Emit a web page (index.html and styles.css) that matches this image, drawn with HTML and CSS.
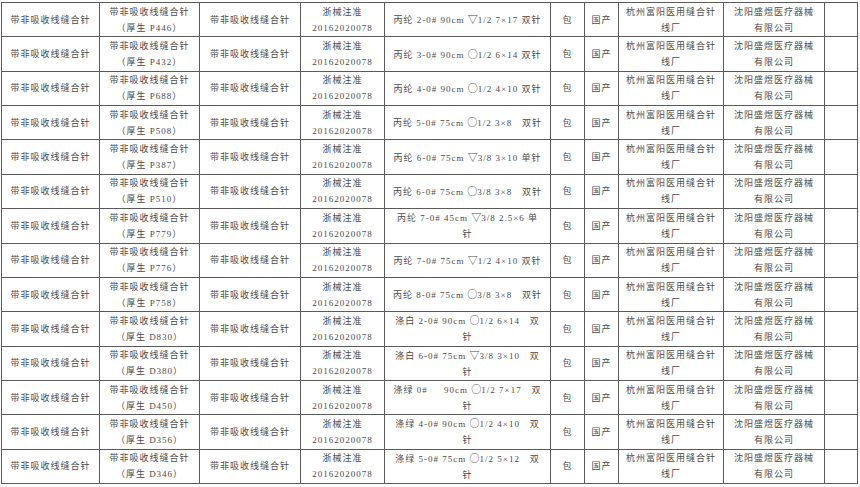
FILE: index.html
```html
<!DOCTYPE html>
<html lang="zh-CN">
<head>
<meta charset="utf-8">
<title>缝合针</title>
<link rel="stylesheet" href="styles.css">
</head>
<body>
<table class="grid">
<colgroup>
<col class="c1"><col class="c2"><col class="c3"><col class="c4"><col class="c5"><col class="c6"><col class="c7"><col class="c8"><col class="c9"><col class="c10">
</colgroup>
<tbody>
<tr><td>带非吸收线缝合针</td><td>带非吸收线缝合针<br>（厚生 P446）</td><td>带非吸收线缝合针</td><td>浙械注准<br>20162020078</td><td class="spec">丙纶 2-0# 90cm <span class="sym">▽</span>1/2 7×17 双针</td><td>包</td><td>国产</td><td>杭州富阳医用缝合针<br>线厂</td><td>沈阳盛煜医疗器械<br>有限公司</td><td></td></tr>
<tr><td>带非吸收线缝合针</td><td>带非吸收线缝合针<br>（厚生 P432）</td><td>带非吸收线缝合针</td><td>浙械注准<br>20162020078</td><td class="spec">丙纶 3-0# 90cm <span class="sym">○</span>1/2 6×14 双针</td><td>包</td><td>国产</td><td>杭州富阳医用缝合针<br>线厂</td><td>沈阳盛煜医疗器械<br>有限公司</td><td></td></tr>
<tr><td>带非吸收线缝合针</td><td>带非吸收线缝合针<br>（厚生 P688）</td><td>带非吸收线缝合针</td><td>浙械注准<br>20162020078</td><td class="spec">丙纶 4-0# 90cm <span class="sym">○</span>1/2 4×10 双针</td><td>包</td><td>国产</td><td>杭州富阳医用缝合针<br>线厂</td><td>沈阳盛煜医疗器械<br>有限公司</td><td></td></tr>
<tr><td>带非吸收线缝合针</td><td>带非吸收线缝合针<br>（厚生 P508）</td><td>带非吸收线缝合针</td><td>浙械注准<br>20162020078</td><td class="spec">丙纶 5-0# 75cm <span class="sym">○</span>1/2 3×8&nbsp;&nbsp; 双针</td><td>包</td><td>国产</td><td>杭州富阳医用缝合针<br>线厂</td><td>沈阳盛煜医疗器械<br>有限公司</td><td></td></tr>
<tr><td>带非吸收线缝合针</td><td>带非吸收线缝合针<br>（厚生 P387）</td><td>带非吸收线缝合针</td><td>浙械注准<br>20162020078</td><td class="spec">丙纶 6-0# 75cm <span class="sym">▽</span>3/8 3×10 单针</td><td>包</td><td>国产</td><td>杭州富阳医用缝合针<br>线厂</td><td>沈阳盛煜医疗器械<br>有限公司</td><td></td></tr>
<tr><td>带非吸收线缝合针</td><td>带非吸收线缝合针<br>（厚生 P510）</td><td>带非吸收线缝合针</td><td>浙械注准<br>20162020078</td><td class="spec">丙纶 6-0# 75cm <span class="sym">○</span>3/8 3×8&nbsp;&nbsp; 双针</td><td>包</td><td>国产</td><td>杭州富阳医用缝合针<br>线厂</td><td>沈阳盛煜医疗器械<br>有限公司</td><td></td></tr>
<tr><td>带非吸收线缝合针</td><td>带非吸收线缝合针<br>（厚生 P779）</td><td>带非吸收线缝合针</td><td>浙械注准<br>20162020078</td><td class="spec">丙纶 7-0# 45cm <span class="sym">▽</span>3/8 2.5×6 单<br>针</td><td>包</td><td>国产</td><td>杭州富阳医用缝合针<br>线厂</td><td>沈阳盛煜医疗器械<br>有限公司</td><td></td></tr>
<tr><td>带非吸收线缝合针</td><td>带非吸收线缝合针<br>（厚生 P776）</td><td>带非吸收线缝合针</td><td>浙械注准<br>20162020078</td><td class="spec">丙纶 7-0# 75cm <span class="sym">▽</span>1/2 4×10 双针</td><td>包</td><td>国产</td><td>杭州富阳医用缝合针<br>线厂</td><td>沈阳盛煜医疗器械<br>有限公司</td><td></td></tr>
<tr><td>带非吸收线缝合针</td><td>带非吸收线缝合针<br>（厚生 P758）</td><td>带非吸收线缝合针</td><td>浙械注准<br>20162020078</td><td class="spec">丙纶 8-0# 75cm <span class="sym">○</span>3/8 3×8&nbsp;&nbsp; 双针</td><td>包</td><td>国产</td><td>杭州富阳医用缝合针<br>线厂</td><td>沈阳盛煜医疗器械<br>有限公司</td><td></td></tr>
<tr><td>带非吸收线缝合针</td><td>带非吸收线缝合针<br>（厚生 D830）</td><td>带非吸收线缝合针</td><td>浙械注准<br>20162020078</td><td class="spec">涤白 2-0# 90cm <span class="sym">○</span>1/2 6×14&nbsp;&nbsp; 双<br>针</td><td>包</td><td>国产</td><td>杭州富阳医用缝合针<br>线厂</td><td>沈阳盛煜医疗器械<br>有限公司</td><td></td></tr>
<tr><td>带非吸收线缝合针</td><td>带非吸收线缝合针<br>（厚生 D380）</td><td>带非吸收线缝合针</td><td>浙械注准<br>20162020078</td><td class="spec">涤白 6-0# 75cm <span class="sym">▽</span>3/8 3×10&nbsp;&nbsp; 双<br>针</td><td>包</td><td>国产</td><td>杭州富阳医用缝合针<br>线厂</td><td>沈阳盛煜医疗器械<br>有限公司</td><td></td></tr>
<tr><td>带非吸收线缝合针</td><td>带非吸收线缝合针<br>（厚生 D450）</td><td>带非吸收线缝合针</td><td>浙械注准<br>20162020078</td><td class="spec">涤绿 0#&nbsp;&nbsp;&nbsp;&nbsp; 90cm <span class="sym">○</span>1/2 7×17&nbsp;&nbsp; 双<br>针</td><td>包</td><td>国产</td><td>杭州富阳医用缝合针<br>线厂</td><td>沈阳盛煜医疗器械<br>有限公司</td><td></td></tr>
<tr><td>带非吸收线缝合针</td><td>带非吸收线缝合针<br>（厚生 D356）</td><td>带非吸收线缝合针</td><td>浙械注准<br>20162020078</td><td class="spec">涤绿 4-0# 90cm <span class="sym">○</span>1/2 4×10&nbsp;&nbsp; 双<br>针</td><td>包</td><td>国产</td><td>杭州富阳医用缝合针<br>线厂</td><td>沈阳盛煜医疗器械<br>有限公司</td><td></td></tr>
<tr><td>带非吸收线缝合针</td><td>带非吸收线缝合针<br>（厚生 D346）</td><td>带非吸收线缝合针</td><td>浙械注准<br>20162020078</td><td class="spec">涤绿 5-0# 75cm <span class="sym">○</span>1/2 5×12&nbsp;&nbsp; 双<br>针</td><td>包</td><td>国产</td><td>杭州富阳医用缝合针<br>线厂</td><td>沈阳盛煜医疗器械<br>有限公司</td><td></td></tr>
</tbody>
</table>
</body>
</html>
```
FILE: styles.css
```css
html, body {
  margin: 0;
  background: #ffffff;
}
body {
  padding: 2px 0 0 1px;
  font-family: "Liberation Serif", "Noto Sans CJK SC", serif;
  font-size: 9px;
  letter-spacing: 1px;
  color: #4a4a4a;
}
.grid {
  border-collapse: separate;
  border-spacing: 0;
  table-layout: fixed;
  width: 857px;
  border-left: 1px solid #5a5a5a;
  border-top: 1px solid #5a5a5a;
}
.grid td {
  box-sizing: border-box;
  height: 34.36px;
  padding: 0 2px;
  border-right: 1px solid #5a5a5a;
  border-bottom: 1px solid #5a5a5a;
  text-align: center;
  vertical-align: middle;
  line-height: 16px;
  white-space: nowrap;
  overflow: hidden;
}
.sym {
  font-family: "Noto Sans CJK SC", sans-serif;
  font-size: 10px;
  letter-spacing: 0;
}
.c1 { width: 98px; }
.c2 { width: 100px; }
.c3 { width: 101px; }
.c4 { width: 84px; }
.c5 { width: 166px; }
.c6 { width: 34px; }
.c7 { width: 34px; }
.c8 { width: 105px; }
.c9 { width: 101px; }
.c10 { width: 33px; }
```
